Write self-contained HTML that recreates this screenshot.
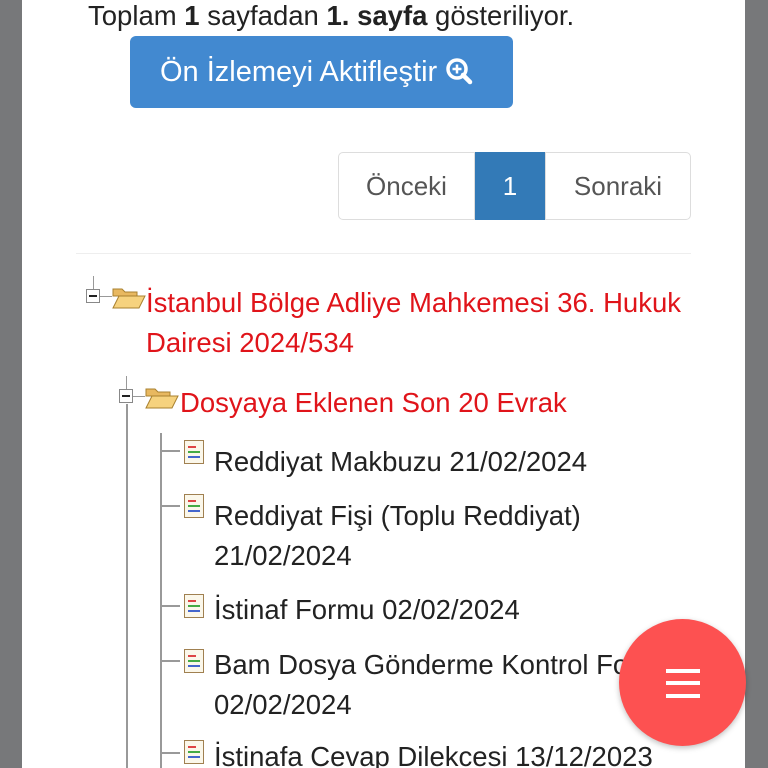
<!DOCTYPE html>
<html style="overflow:hidden"><head><meta charset="utf-8"><style>
*{margin:0;padding:0;box-sizing:border-box}
html,body{width:768px;height:768px;overflow:hidden}
body{background:#77787a;font-family:"Liberation Sans",sans-serif;position:relative}
.panel{position:absolute;left:22px;top:0;width:723px;height:768px;background:#fff}
.t{position:absolute;white-space:nowrap;font-size:27.5px;color:#222;line-height:32px}
.red{color:#e0141a}
.btn{position:absolute;left:130px;top:36px;width:383px;height:72px;background:#4289d0;border-radius:6px;color:#fff;font-size:29px;line-height:72px;padding-left:30px;white-space:nowrap}
.pg{position:absolute;top:152px;height:68px;border:1px solid #ddd;font-size:26px;color:#555;text-align:center;line-height:66px}
.vl{position:absolute;width:2px;background:#999}
.hl{position:absolute;height:2px;background:#999}
.box{position:absolute;width:14px;height:14px;border:1px solid #888;background:#fff}
.box:after{content:"";position:absolute;left:2px;top:5px;width:8px;height:2px;background:#222}
.doc{position:absolute;width:20px;height:24px;border:1px solid #a08050;background:#fbf7ea}
.doc i{position:absolute;left:3px;height:2px}
</style></head><body>
<div class="panel"></div>
<div class="t" style="left:88px;top:0px">Toplam <b>1</b> sayfadan <b>1. sayfa</b> gösteriliyor.</div>
<div class="btn">Ön İzlemeyi Aktifleştir <svg width="28" height="28" viewBox="0 0 28 28" style="vertical-align:-4px"><circle cx="12" cy="12" r="9" fill="none" stroke="#fff" stroke-width="3.5"/><path d="M18 18l7 7" stroke="#fff" stroke-width="4.5" stroke-linecap="round"/><path d="M12 7.5v9M7.5 12h9" stroke="#fff" stroke-width="2.5"/></svg></div>
<div class="pg" style="left:338px;width:137px;border-radius:5px 0 0 5px">Önceki</div>
<div class="pg" style="left:475px;width:70px;background:#337ab7;border-color:#337ab7;color:#fff">1</div>
<div class="pg" style="left:545px;width:146px;border-radius:0 5px 5px 0">Sonraki</div>
<div style="position:absolute;left:76px;top:253px;width:615px;height:1px;background:#eee"></div>

<div class="vl" style="left:93px;top:276px;height:14px;width:1px"></div>
<div class="box" style="left:86px;top:289px"></div>
<div class="hl" style="left:100px;top:296px;width:12px;height:1px"></div>
<svg style="position:absolute;left:112px;top:286px" width="34" height="24" viewBox="0 0 34 24"><path d="M1 3h9l3 3h12v4H1z" fill="#e8b860" stroke="#a8802f"/><path d="M1 22L7 10h26l-6 12z" fill="#f6d27e" stroke="#a8802f"/></svg>
<div class="t red" style="left:146px;top:287px">İstanbul Bölge Adliye Mahkemesi 36. Hukuk</div>
<div class="t red" style="left:146px;top:327px">Dairesi 2024/534</div>

<div class="vl" style="left:126px;top:376px;height:14px;width:1px"></div>
<div class="box" style="left:119px;top:389px"></div>
<div class="vl" style="left:126px;top:404px;height:364px"></div>
<div class="hl" style="left:133px;top:396px;width:12px;height:1px"></div>
<svg style="position:absolute;left:145px;top:386px" width="34" height="24" viewBox="0 0 34 24"><path d="M1 3h9l3 3h12v4H1z" fill="#e8b860" stroke="#a8802f"/><path d="M1 22L7 10h26l-6 12z" fill="#f6d27e" stroke="#a8802f"/></svg>
<div class="t red" style="left:180px;top:387px">Dosyaya Eklenen Son 20 Evrak</div>

<div class="vl" style="left:160px;top:433px;height:335px"></div>
<div class="hl" style="left:160px;top:450px;width:20px"></div>
<div class="hl" style="left:160px;top:505px;width:20px"></div>
<div class="hl" style="left:160px;top:605px;width:20px"></div>
<div class="hl" style="left:160px;top:660px;width:20px"></div>
<div class="hl" style="left:160px;top:752px;width:20px"></div>

<div class="doc" style="left:184px;top:440px"><i style="top:5px;width:8px;background:#d44"></i><i style="top:10px;width:12px;background:#4a4"></i><i style="top:15px;width:12px;background:#46c"></i></div>
<div class="doc" style="left:184px;top:494px"><i style="top:5px;width:8px;background:#d44"></i><i style="top:10px;width:12px;background:#4a4"></i><i style="top:15px;width:12px;background:#46c"></i></div>
<div class="doc" style="left:184px;top:594px"><i style="top:5px;width:8px;background:#d44"></i><i style="top:10px;width:12px;background:#4a4"></i><i style="top:15px;width:12px;background:#46c"></i></div>
<div class="doc" style="left:184px;top:649px"><i style="top:5px;width:8px;background:#d44"></i><i style="top:10px;width:12px;background:#4a4"></i><i style="top:15px;width:12px;background:#46c"></i></div>
<div class="doc" style="left:184px;top:740px"><i style="top:5px;width:8px;background:#d44"></i><i style="top:10px;width:12px;background:#4a4"></i><i style="top:15px;width:12px;background:#46c"></i></div>

<div class="t" style="left:214px;top:446px">Reddiyat Makbuzu 21/02/2024</div>
<div class="t" style="left:214px;top:500px">Reddiyat Fişi (Toplu Reddiyat)</div>
<div class="t" style="left:214px;top:540px">21/02/2024</div>
<div class="t" style="left:214px;top:594px">İstinaf Formu 02/02/2024</div>
<div class="t" style="left:214px;top:649px">Bam Dosya Gönderme Kontrol Formu</div>
<div class="t" style="left:214px;top:689px">02/02/2024</div>
<div class="t" style="left:214px;top:741px">İstinafa Cevap Dilekcesi 13/12/2023</div>

<div style="position:absolute;left:619px;top:619px;width:127px;height:127px;border-radius:50%;background:#fd5151;box-shadow:0 2px 6px rgba(0,0,0,.25)"></div>
<div style="position:absolute;left:666px;top:669px;width:34px;height:4px;background:#fff"></div>
<div style="position:absolute;left:666px;top:681px;width:34px;height:4px;background:#fff"></div>
<div style="position:absolute;left:666px;top:694px;width:34px;height:4px;background:#fff"></div>
</body></html>
